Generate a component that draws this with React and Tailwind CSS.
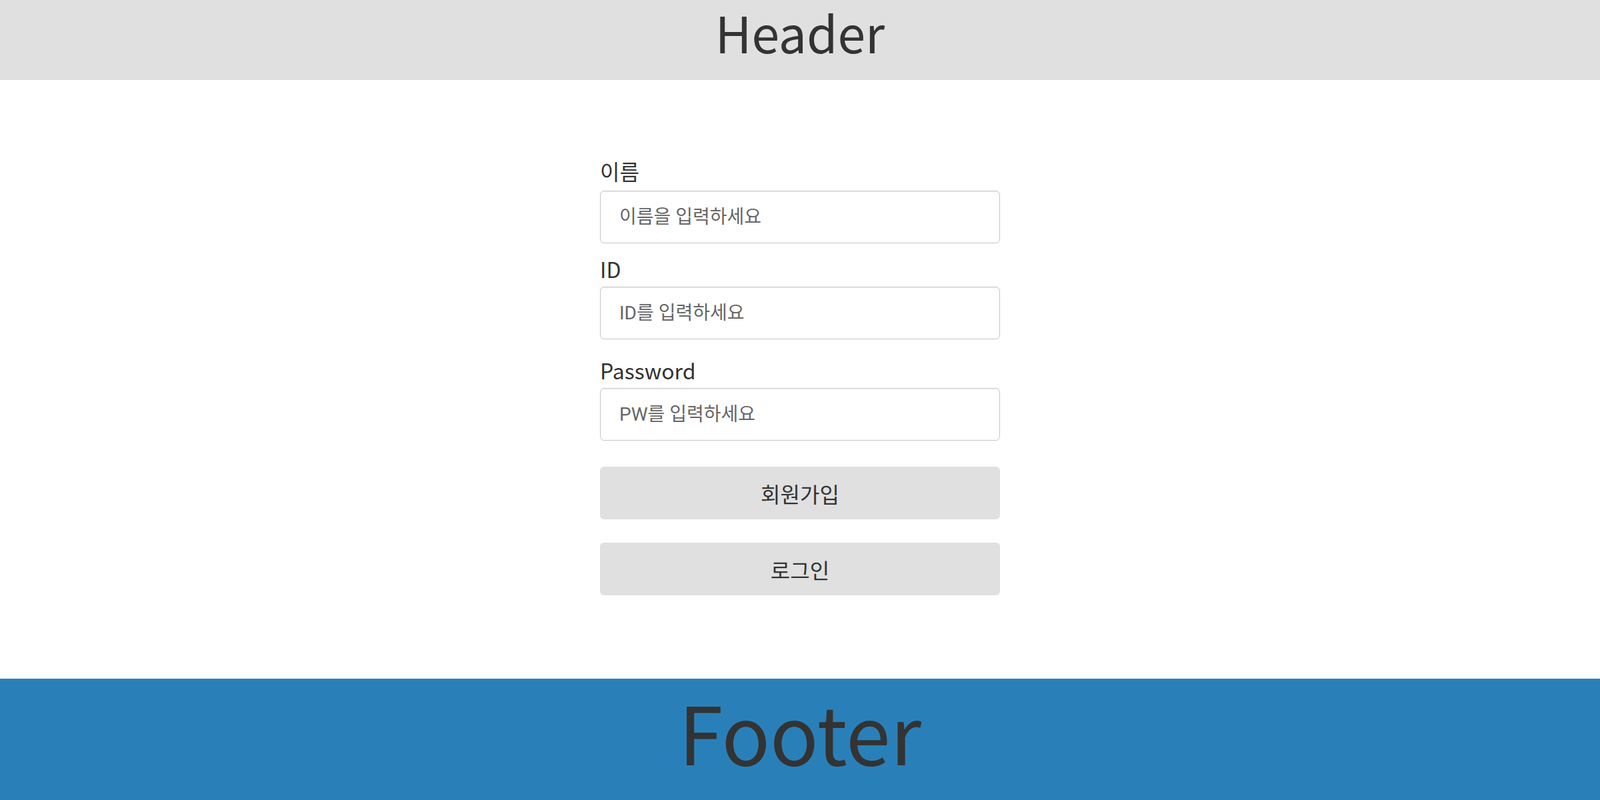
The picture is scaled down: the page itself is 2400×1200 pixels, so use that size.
import React from 'react';

const fields = [
  { label: '이름', placeholder: '이름을 입력하세요', gap: 'mt-0', labelCls: 'leading-[40px] mb-[10px]' },
  { label: 'ID', placeholder: 'ID를 입력하세요', gap: 'mt-[15px]', labelCls: 'leading-[46px] mb-[4px]' },
  { label: 'Password', placeholder: 'PW를 입력하세요', gap: 'mt-[23px]', labelCls: 'leading-[46px] mb-[4px]' },
];

const App = () => {
  return (
    <div className="flex flex-col h-[1200px] bg-white text-[#333] font-['Noto_Sans_CJK_KR','Noto_Sans',sans-serif]">
      {/* Header */}
      <header className="h-[120px] shrink-0 bg-[#e0e0e0] pt-[10px] text-center">
        <h1 className="text-[75px] leading-[75px] font-normal">Header</h1>
      </header>

      {/* Form */}
      <main className="flex-1 flex flex-col items-center justify-center pb-[9px]">
        <form className="w-[600px] flex flex-col" onSubmit={e => e.preventDefault()}>
          {fields.map(f => (
            <div key={f.label} className={f.gap}>
              <label className={`block text-[32px] ${f.labelCls}`}>{f.label}</label>
              <input
                type="text"
                placeholder={f.placeholder}
                className="block w-full h-[79px] px-[28px] font-['Roboto','Noto_Sans_CJK_KR',sans-serif] text-[28px] border border-[#c8c8c8] rounded-[6px] shadow-[inset_0_1px_2px_rgba(0,0,0,0.08)] outline-none placeholder:text-[#666]"
              />
            </div>
          ))}

          <button className="mt-[39px] h-[79px] w-full rounded-[6px] bg-[#e0e0e0] text-[32px] text-[#333]">
            회원가입
          </button>
          <button className="mt-[35px] h-[79px] w-full rounded-[6px] bg-[#e0e0e0] text-[32px] text-[#333]">
            로그인
          </button>
        </form>
      </main>

      {/* Footer */}
      <footer className="h-[182px] shrink-0 bg-[#2980b9] pt-[18px] text-center">
        <p className="text-[120px] leading-[120px]">Footer</p>
      </footer>
    </div>
  );
};

export default App;
